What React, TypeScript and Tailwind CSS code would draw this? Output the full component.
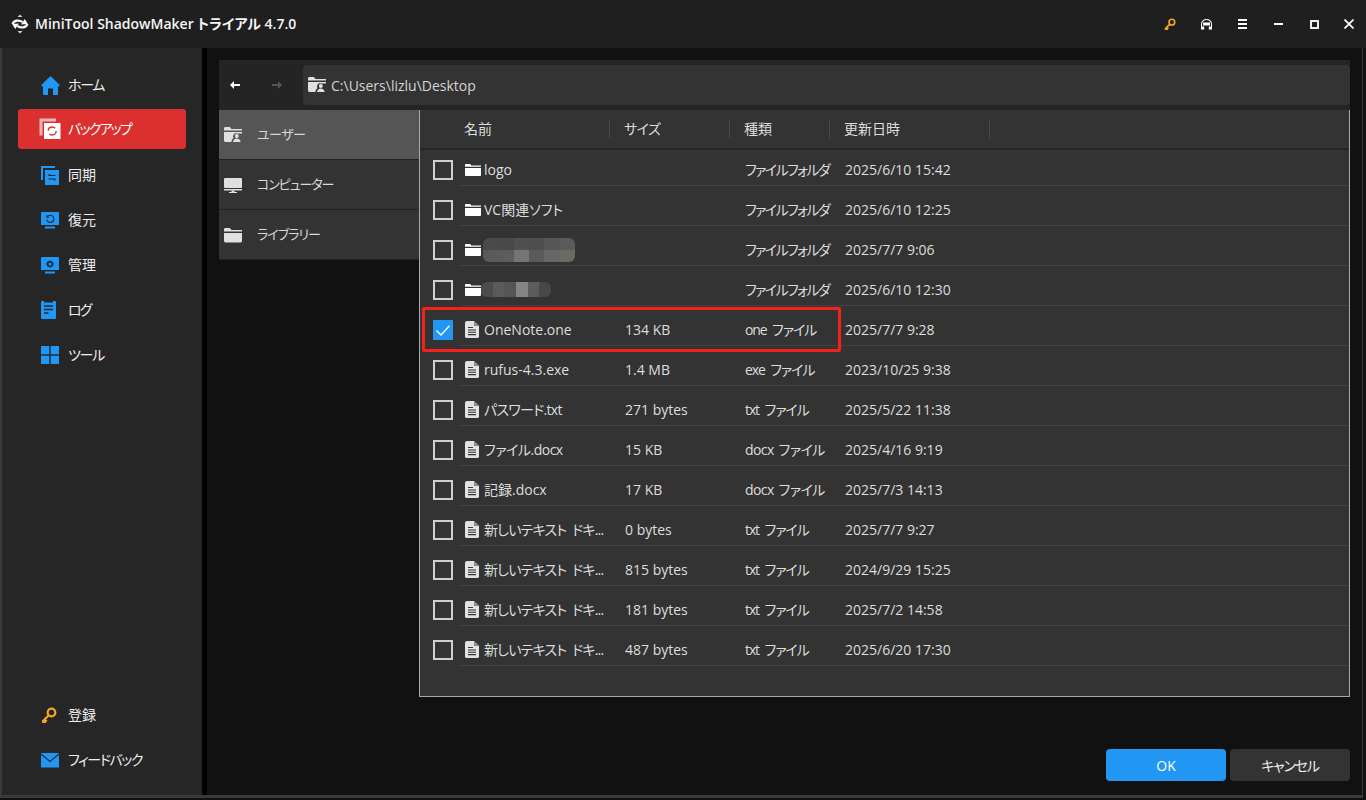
import React from "react";

const F = { fontFamily: '"Open Sans","Noto Sans CJK JP",sans-serif' };

function Logo() {
  return (
    <svg width="20" height="20" viewBox="0 0 20 20" fill="none">
      <path d="M10 .5 L12.500 3 H7.500 Z M10 19.500 L12.500 17 H7.500 Z" fill="#cfcfcf" />
      <path d="M2.500 10 C4 6.200 9 5.600 12.500 8" stroke="#fff" strokeWidth="2.200" />
      <path d="M17.800 10 L11 10.400 L14.800 5 Z" fill="#fff" />
      <path d="M17.500 10 C16 13.800 11 14.400 7.500 12" stroke="#fff" strokeWidth="2.200" />
      <path d="M2.200 10 L9 9.600 L5.200 15 Z" fill="#fff" />
    </svg>
  );
}
function FolderUser({ c = "#e0e0e0" }: { c?: string }) {
  return (
    <svg width="18" height="16" viewBox="0 0 18 16">
      <path d="M0 1.500C0 .7.600 0 1.400 0h4.400l1.700 2H18v1.600H0z" fill={c} />
      <path d="M0 5h18v1.500h-5.200a3 3 0 0 0-3.300 4.600 5 5 0 0 0-2.200 3.900H1.400C.6 15 0 14.400 0 13.600z" fill={c} />
      <circle cx="12.800" cy="9" r="2" fill={c} />
      <path d="M9 15c.3-2.400 1.900-3.600 3.800-3.600s3.500 1.200 3.800 3.600z" fill={c} />
    </svg>
  );
}
function Monitor() {
  return (
    <svg width="18" height="16" viewBox="0 0 18 16" fill="#e0e0e0">
      <rect x="0" y="1" width="18" height="10" rx="1" />
      <rect x="0" y="12" width="18" height="1.500" />
      <rect x="7.500" y="13.500" width="3" height="1.500" />
      <rect x="5" y="15" width="8" height="1" />
    </svg>
  );
}
function Library() {
  return (
    <svg width="18" height="16" viewBox="0 0 18 16" fill="#e0e0e0">
      <path d="M0 2.500C0 1.700.6 1 1.400 1h4.400l1.700 2H18v1.600H0z" />
      <path d="M0 6h18v8a1.400 1.400 0 0 1-1.400 1.400H1.400A1.400 1.400 0 0 1 0 14z" />
    </svg>
  );
}
function Folder() {
  return (
    <svg width="16" height="14" viewBox="0 0 16 14" fill="#fff">
      <path d="M0 2C0 1.400.4 1 1 1h4l1.500 1.500H16v1.300H0z" />
      <path d="M0 5h16v7.200c0 .5-.4.800-.8.800H.8C.4 13 0 12.700 0 12.200z" />
    </svg>
  );
}
function FileIcon() {
  return (
    <svg width="14" height="17" viewBox="0 0 14 17">
      <path d="M2 0h7l5 5v10.500c0 .8-.7 1.500-1.500 1.500h-11C.7 17 0 16.300 0 15.500V2C0 .9.900 0 2 0z" fill="#e2e2e2" />
      <path d="M9 0v5h5" fill="#8a8a8a" />
      <path d="M3 6.500h5M3 9h8M3 11.300h8M3 13.600h8" stroke="#333" strokeWidth="1.100" />
    </svg>
  );
}
const Home = () => (
  <svg width="19" height="19" viewBox="0 0 19 19" fill="#2196f3">
    <path d="M9.500 0 L19 9.200 L17.600 10.600 L17 10 V18 a1 1 0 0 1-1 1 H12 V12.500 H7 V19 H3 a1 1 0 0 1-1-1 V10 L1.400 10.600 L0 9.200 Z" />
  </svg>
);
const Backup = () => (
  <svg className="-ml-[2px]" width="22" height="22" viewBox="0 0 22 22">
    <path d="M.5.5h16.500v3H3.500v14H.5z" fill="#f0d8d8" opacity=".8" />
    <rect x="5" y="5" width="16.500" height="16" fill="#fff" />
    <circle cx="13.200" cy="13" r="4" stroke="#dc2f2f" strokeWidth="1.500" fill="none" strokeDasharray="9 3.600" />
  </svg>
);
const Sync = () => (
  <svg width="18" height="19" viewBox="0 0 18 19" fill="#2196f3">
    <path d="M0 0h14v2H2v12H0z" />
    <path d="M4 4h14v15H4z" />
    <path d="M7.500 9.500h7M7.500 9.500l1.500-1.300M14.500 13h-7M14.500 13l-1.500 1.300" stroke="#262626" strokeWidth="1.200" fill="none" />
  </svg>
);
const Restore = ({ gear }: { gear?: boolean }) => (
  <svg width="18" height="17" viewBox="0 0 18 17" fill="#2196f3">
    <path d="M1 0h16a1 1 0 0 1 1 1v12H0V1a1 1 0 0 1 1-1z" />
    <rect x="4" y="14.500" width="10" height="2" />
    {gear ? (
      <path d="M9 3l1 1.300 1.700.1.400 1.600 1.100 1-1.100 1-.4 1.600-1.700.1L9 11 8 9.700l-1.700-.1-.4-1.600-1.100-1 1.100-1 .4-1.600L8 4.300z M9 5.500a1.500 1.500 0 1 0 0 3 1.500 1.500 0 0 0 0-3z" fill="#1b2a38" fillRule="evenodd" />
    ) : (
      <>
        <path d="M6.500 4.500a3.600 3.600 0 1 1-.8 3" stroke="#1b2a38" strokeWidth="1.200" fill="none" />
        <path d="M5.500 2.800v3h3z" fill="#1b2a38" />
      </>
    )}
  </svg>
);
const Log = () => (
  <svg width="15" height="18" viewBox="0 0 15 18" fill="#2196f3">
    <path d="M1 0h2v1.500h9V0h2a1 1 0 0 1 1 1v16a1 1 0 0 1-1 1H1a1 1 0 0 1-1-1V1a1 1 0 0 1 1-1z" />
    <path d="M3 5h9M3 8.500h9M3 12h4.500" stroke="#1d2b38" strokeWidth="1.300" />
  </svg>
);
const Tools = () => (
  <svg width="18" height="18" viewBox="0 0 18 18" fill="#2196f3">
    <rect width="8.300" height="8.300" />
    <rect x="9.700" width="8.300" height="8.300" />
    <rect y="9.700" width="8.300" height="8.300" />
    <rect x="9.700" y="9.700" width="8.300" height="8.300" />
  </svg>
);
const KeyIcon = ({ s = 16 }: { s?: number }) => (
  <svg width={s} height={s} viewBox="0 0 16 16" fill="none">
    <circle cx="10.500" cy="5.500" r="3.800" stroke="#f5a623" strokeWidth="2.200" />
    <path d="M7.800 8.200L1.500 14.500M1 15l3 .2 1.500-2.500" stroke="#f5a623" strokeWidth="2.200" />
  </svg>
);
const Mail = () => (
  <svg width="18" height="15" viewBox="0 0 18 15" fill="#2196f3">
    <path d="M0 0h18v14.500H0z" />
    <path d="M0 1l9 7.500L18 1" stroke="#1b2a38" strokeWidth="1.300" fill="none" />
  </svg>
);
const Headset = () => (
  <svg width="11" height="11" viewBox="0 0 11 11" fill="#fff">
    <path d="M0 10.500V5a5.500 5 0 0 1 11 0v5.500H7.800V7.500H10V5A4.500 4 0 0 0 1 5v2.500h2.200v3z" />
    <path d="M2 3.500h7v3H2z" />
  </svg>
);

const Nav = ({
  icon,
  label,
  active,
  cls,
  tr = "",
}: {
  icon: React.ReactNode;
  label: string;
  active?: boolean;
  cls: string;
  tr?: string;
}) => (
  <div
    className={`flex h-10 w-[168px] items-center rounded-[3px] pl-[23px] text-[14px] leading-none ${cls} ${
      active ? "bg-[#dc2f2f] text-white" : "text-[#eeeeee]"
    }`}
  >
    <span className="flex w-[27px] shrink-0 items-center">{icon}</span>
    <span className={tr}>{label}</span>
  </div>
);

const Tab = ({ icon, label, active, tr }: { icon: React.ReactNode; label: string; active?: boolean; tr: string }) => (
  <div
    className={`flex h-[50px] items-center border-b border-[#222222] pl-[5px] text-[13px] text-[#d8d8d8] ${
      active ? "bg-[#555555]" : "bg-[#333333]"
    }`}
  >
    <span className="flex w-[33px] items-center">{icon}</span>
    <span className={tr}>{label}</span>
  </div>
);

type Row = {
  kind: "d" | "f";
  name?: string;
  nt?: string;
  blur?: 1 | 2;
  size?: string;
  type: string;
  tt: string;
  date: string;
  on?: boolean;
};
const DIR = "tracking-[-1.6px]";
const FILE = "tracking-[-1.1px] [word-spacing:3px]";
const DOCX = "tracking-[-0.6px] [word-spacing:2px]";
const NEW = "tracking-[-0.8px] [word-spacing:3px]";
const rows: Row[] = [
  { kind: "d", name: "logo", type: "ファイルフォルダ", tt: DIR, date: "2025/6/10 15:42" },
  { kind: "d", name: "VC関連ソフト", type: "ファイルフォルダ", tt: DIR, date: "2025/6/10 12:25" },
  { kind: "d", blur: 1, type: "ファイルフォルダ", tt: DIR, date: "2025/7/7 9:06" },
  { kind: "d", blur: 2, type: "ファイルフォルダ", tt: DIR, date: "2025/6/10 12:30" },
  { kind: "f", name: "OneNote.one", size: "134 KB", type: "one ファイル", tt: FILE, date: "2025/7/7 9:28", on: true },
  { kind: "f", name: "rufus-4.3.exe", size: "1.4 MB", type: "exe ファイル", tt: FILE, date: "2023/10/25 9:38" },
  { kind: "f", name: "パスワード.txt", nt: "tracking-[-0.7px]", size: "271 bytes", type: "txt ファイル", tt: FILE, date: "2025/5/22 11:38" },
  { kind: "f", name: "ファイル.docx", nt: "tracking-[-0.5px]", size: "15 KB", type: "docx ファイル", tt: DOCX, date: "2025/4/16 9:19" },
  { kind: "f", name: "記録.docx", size: "17 KB", type: "docx ファイル", tt: DOCX, date: "2025/7/3 14:13" },
  { kind: "f", name: "新しいテキスト ドキ...", nt: NEW, size: "0 bytes", type: "txt ファイル", tt: FILE, date: "2025/7/7 9:27" },
  { kind: "f", name: "新しいテキスト ドキ...", nt: NEW, size: "815 bytes", type: "txt ファイル", tt: FILE, date: "2024/9/29 15:25" },
  { kind: "f", name: "新しいテキスト ドキ...", nt: NEW, size: "181 bytes", type: "txt ファイル", tt: FILE, date: "2025/7/2 14:58" },
  { kind: "f", name: "新しいテキスト ドキ...", nt: NEW, size: "487 bytes", type: "txt ファイル", tt: FILE, date: "2025/6/20 17:30" },
];

const mosaic1 = [
  ["#4a4a4a", "#484a4a", "#505050", "#4e4e4e", "#565656", "#5a5a58"],
  ["#5a5a5a", "#5c5c5c", "#757575", "#5a5a5a", "#666666", "#6a6a62"],
];
const mosaic2 = [["#4c4c4c", "#5a5a5a", "#555555", "#858585", "#5c5c5c", "#484848"]];

const Blur = ({ data, cls }: { data: string[][]; cls: string }) => (
  <div className={`flex flex-col overflow-hidden rounded-[6px] ${cls}`}>
    {data.map((r, i) => (
      <div key={i} className="flex flex-1">
        {r.map((c, j) => (
          <div key={j} className="flex-1" style={{ background: c }} />
        ))}
      </div>
    ))}
  </div>
);

export default function App() {
  return (
    <div className="flex h-[800px] w-[1366px] flex-col overflow-hidden bg-[#111111] text-white [font-feature-settings:'palt']" style={F}>
      <div className="flex h-12 shrink-0 items-center bg-[#1f1f1f]">
        <div className="ml-[10px] w-[25px]">
          <Logo />
        </div>
        <span className="text-[14px] font-semibold leading-none text-[#f5f5f5]">MiniTool ShadowMaker トライアル 4.7.0</span>
        <div className="ml-auto flex items-center">
          <span className="flex w-9 justify-center"><KeyIcon s={12} /></span>
          <span className="flex w-9 justify-center"><Headset /></span>
          <span className="flex w-9 justify-center">
            <span className="flex flex-col gap-[2px]">
              <span className="h-[2px] w-[9px] bg-white" />
              <span className="h-[2px] w-[9px] bg-white" />
              <span className="h-[2px] w-[9px] bg-white" />
            </span>
          </span>
          <span className="flex w-9 justify-center"><span className="h-[2px] w-[9px] bg-white" /></span>
          <span className="flex w-9 justify-center"><span className="h-[9px] w-[9px] border-2 border-[#eeeeee]" /></span>
          <span className="flex w-[34px] justify-center">
            <svg width="10" height="10" viewBox="0 0 10 10" stroke="#fff" strokeWidth="1.700">
              <path d="M.5.5l9 9M9.500.5l-9 9" />
            </svg>
          </span>
        </div>
      </div>

      <div className="flex h-[750px] w-[1363px] shrink-0 border-b-[3px] border-l-2 border-r border-[#3a3a3a]">
        <aside className="flex w-[200px] shrink-0 flex-col bg-[#262626] pb-[15px] pl-4 pt-[17px]">
          <Nav cls="mb-[4px]" tr="tracking-[-1.3px]" icon={<Home />} label="ホーム" />
          <Nav cls="mb-[6px]" tr="tracking-[-1.8px]" active icon={<Backup />} label="バックアップ" />
          <Nav cls="mb-[5px]" icon={<Sync />} label="同期" />
          <Nav cls="mb-[5px]" icon={<Restore />} label="復元" />
          <Nav cls="mb-[5px]" icon={<Restore gear />} label="管理" />
          <Nav cls="mb-[5px]" tr="tracking-[-2px]" icon={<Log />} label="ログ" />
          <Nav cls="" tr="tracking-[-1.3px]" icon={<Tools />} label="ツール" />
          <Nav cls="mb-[5px] mt-auto" icon={<KeyIcon />} label="登録" />
          <Nav cls="" tr="tracking-[-1.4px]" icon={<Mail />} label="フィードバック" />
        </aside>
        <div className="w-[5px] shrink-0 bg-black" />
        <main className="w-[1143px] shrink-0 pl-3 pt-3">
          <div className="flex h-[50px] w-[1131px] items-center bg-[#242424]">
            <svg className="ml-[11px]" width="10" height="8" viewBox="0 0 10 8" fill="#fff">
              <path d="M0 4l4-4v3h6v2H4v3z" />
            </svg>
            <svg className="ml-[32px]" width="10" height="8" viewBox="0 0 10 8" fill="#555555">
              <path d="M10 4L6 0v3H0v2h6v3z" />
            </svg>
            <div className="ml-[21px] flex h-10 flex-1 items-center rounded-[4px] bg-[#333333] pl-[5px] text-[14px] text-[#d4d4d4]">
              <span className="w-[23px]"><FolderUser /></span>
              C:\Users\lizlu\Desktop
            </div>
          </div>
          <div className="flex w-[1131px]">
            <div className="w-[200px] shrink-0">
              <Tab active tr="tracking-[-0.5px]" icon={<FolderUser />} label="ユーザー" />
              <Tab tr="tracking-[-1.1px]" icon={<Monitor />} label="コンピューター" />
              <Tab tr="tracking-[-1px]" icon={<Library />} label="ライブラリー" />
            </div>
            <div className="relative h-[587px] flex-1 border-b border-l border-r border-[#a8a8a8] bg-[#333333] text-[14px] text-[#dddddd]">
              <div className="flex h-10 items-center border-b-2 border-[#262626] text-[14px] leading-none">
                <div className="w-[190px] border-r border-[#4a4a4a] py-[2px] pl-[44px]">名前</div>
                <div className="w-[120px] border-r border-[#4a4a4a] py-[2px] pl-[14px] tracking-[-0.6px]">サイズ</div>
                <div className="w-[100px] border-r border-[#4a4a4a] py-[2px] pl-[14px]">種類</div>
                <div className="w-[160px] border-r border-[#4a4a4a] py-[2px] pl-[14px]">更新日時</div>
              </div>
              {rows.map((r, i) => (
                <div key={i} className="mb-[4px] flex h-9 pt-1">
                  <div className="flex w-[40px] shrink-0 items-center pl-[13px]">
                    {r.on ? (
                      <span className="flex h-5 w-5 items-center justify-center bg-[#2196f3]">
                        <svg width="14" height="11" viewBox="0 0 14 11" fill="none" stroke="#fff" strokeWidth="1.300">
                          <path d="M.5 5.500L5 10 13.500.8" />
                        </svg>
                      </span>
                    ) : (
                      <span className="h-5 w-5 border-2 border-[#d0d0d0]" />
                    )}
                  </div>
                  <div className="flex flex-1 items-center border-b border-[#424242] leading-none">
                    <div className="flex w-[150px] shrink-0 items-center pl-1">
                      <span className="flex w-[20px] shrink-0 items-center pl-[1px]">
                        {r.kind === "d" ? <Folder /> : <FileIcon />}
                      </span>
                      {r.blur === 1 && <Blur data={mosaic1} cls="ml-[-1px] h-6 w-[92px]" />}
                      {r.blur === 2 && <Blur data={mosaic2} cls="ml-[-3px] h-[15px] w-[70px]" />}
                      {r.name && <span className={`block w-[126px] truncate leading-[18px] ${r.nt ?? ""}`}>{r.name}</span>}
                    </div>
                    <div className="w-[120px] shrink-0 pl-[15px]">{r.size}</div>
                    <div className={`w-[100px] shrink-0 whitespace-nowrap pl-[15px] ${r.tt}`}>{r.type}</div>
                    <div className="pl-[15px]">{r.date}</div>
                  </div>
                </div>
              ))}
              <div className="absolute left-[2px] top-[197px] h-[45px] w-[419px] rounded-[2px] border-[3px] border-[#f5201a]" />
            </div>
          </div>
          <div className="mt-[52px] flex w-[1131px] justify-end gap-1 text-[14px]">
            <div className="flex h-8 w-[120px] items-center justify-center rounded-[4px] bg-[#2196f3] text-white">OK</div>
            <div className="flex h-8 w-[120px] items-center justify-center rounded-[4px] bg-[#333333] text-[#eeeeee] tracking-[-1.2px]">キャンセル</div>
          </div>
        </main>
      </div>
    </div>
  );
}
